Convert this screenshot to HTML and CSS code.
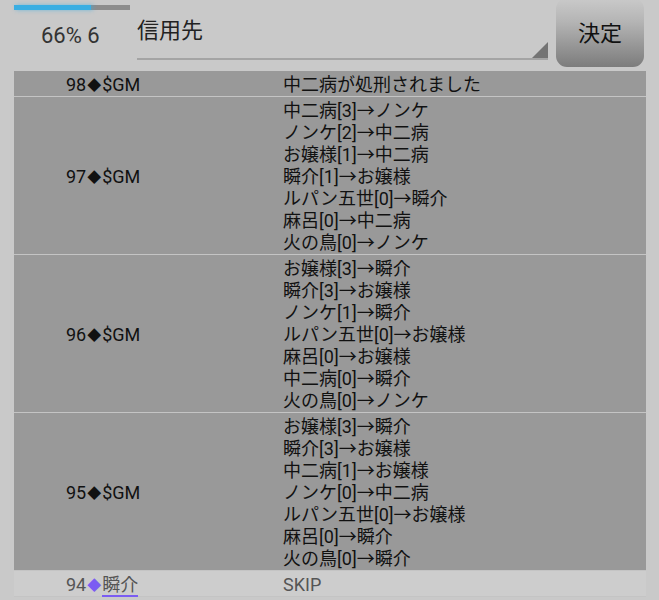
FILE: index.html
```html
<!DOCTYPE html>
<html lang="ja">
<head>
  <meta charset="UTF-8">
  <meta name="viewport" content="width=device-width, initial-scale=1.0">
  <title>投票ログ</title>
  <link rel="stylesheet" href="styles.css">
</head>
<body>
  <div class="top">
    <div class="status">
      <div class="progress"><div class="progress-fill" style="width: 66%"></div></div>
      <div class="count">66% 6</div>
    </div>
    <div class="spinner">
      <span class="spinner-text">信用先</span>
      <span class="spinner-arrow"></span>
    </div>
    <button class="decide">決定</button>
  </div>

  <div class="log">
    <div class="row">
      <div class="who">98<span class="mark">◆</span>$GM</div>
      <div class="what">中二病が処刑されました</div>
    </div>
    <div class="row">
      <div class="who">97<span class="mark">◆</span>$GM</div>
      <div class="what">
        中二病[3]→ノンケ<br>
        ノンケ[2]→中二病<br>
        お嬢様[1]→中二病<br>
        瞬介[1]→お嬢様<br>
        ルパン五世[0]→瞬介<br>
        麻呂[0]→中二病<br>
        火の鳥[0]→ノンケ
      </div>
    </div>
    <div class="row">
      <div class="who">96<span class="mark">◆</span>$GM</div>
      <div class="what">
        お嬢様[3]→瞬介<br>
        瞬介[3]→お嬢様<br>
        ノンケ[1]→瞬介<br>
        ルパン五世[0]→お嬢様<br>
        麻呂[0]→お嬢様<br>
        中二病[0]→瞬介<br>
        火の鳥[0]→ノンケ
      </div>
    </div>
    <div class="row">
      <div class="who">95<span class="mark">◆</span>$GM</div>
      <div class="what">
        お嬢様[3]→瞬介<br>
        瞬介[3]→お嬢様<br>
        中二病[1]→お嬢様<br>
        ノンケ[0]→中二病<br>
        ルパン五世[0]→お嬢様<br>
        麻呂[0]→瞬介<br>
        火の鳥[0]→瞬介
      </div>
    </div>
    <div class="row row-player">
      <div class="who">94<span class="mark">◆</span><span class="name">瞬介</span></div>
      <div class="what">SKIP</div>
    </div>
  </div>
</body>
</html>
```

FILE: styles.css
```css
body {
  margin: 0;
  background: #c9c9c9;
  font-family: Roboto, "Noto Sans CJK JP", sans-serif;
  color: #111;
  overflow: hidden;
}

.top {
  display: flex;
  height: 71px;
}

.status {
  width: 116px;
  margin-left: 14px;
}

.progress {
  margin-top: 5px;
  height: 5px;
  background: #8c8c8c;
}

.progress-fill {
  height: 100%;
  background: #3aaee2;
  box-shadow: 2px 0 4px rgba(58, 174, 226, 0.6);
}

.count {
  margin: 13px 0 0 27px;
  font-size: 22px;
  color: #333;
}

.spinner {
  position: relative;
  width: 411px;
  height: 58px;
  margin-left: 7px;
  border-bottom: 2px solid #a4a4a4;
}

.spinner-text {
  display: block;
  margin-top: 12px;
  font-size: 22px;
  color: #222;
}

.spinner-arrow {
  position: absolute;
  right: 0;
  bottom: 0;
  width: 0;
  height: 0;
  border-left: 16px solid transparent;
  border-bottom: 16px solid #747474;
}

.decide {
  width: 88px;
  height: 69px;
  margin: -2px 0 0 8px;
  padding: 0 0 4px;
  border: none;
  border-radius: 11px;
  background: linear-gradient(#cacaca, #b4b4b4 35%, #7c7c7c);
  font-family: "Noto Sans CJK JP", sans-serif;
  font-size: 22px;
  color: #111;
}

.log {
  width: 632px;
  margin-left: 14px;
}

.row {
  display: grid;
  grid-template-columns: 269px 1fr;
  align-items: center;
  background: #999;
  padding: 3px 0 0;
  border-bottom: 1px solid #c4c4c4;
  font-size: 18px;
  line-height: 22px;
}

.who {
  padding-left: 52px;
}

.mark {
  display: inline-block;
  font-size: 14px;
  margin: 0 1px;
  vertical-align: 1px;
}

.row-player {
  background: #cdcdcd;
  color: #555;
}

.row-player .mark {
  color: #7b5cf2;
}

.name {
  border-bottom: 2px solid #7b5cf2;
}
```
